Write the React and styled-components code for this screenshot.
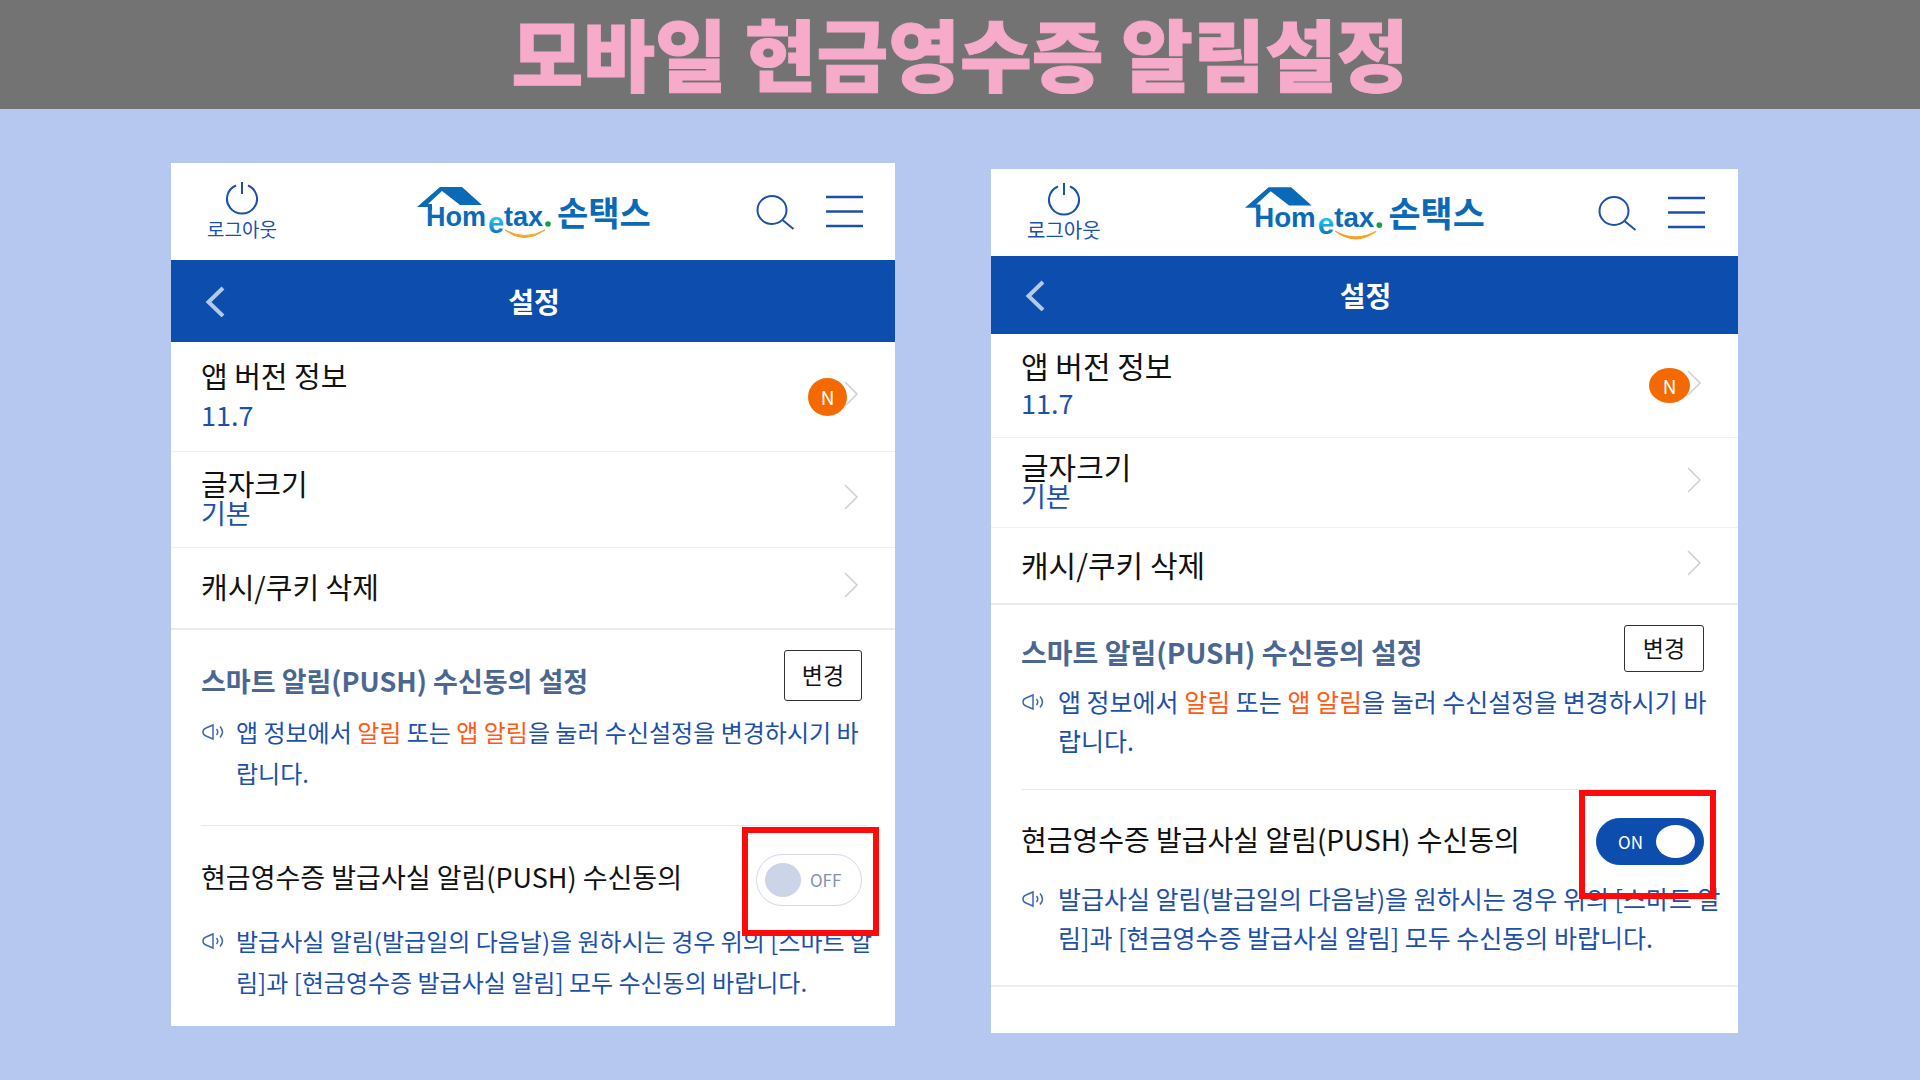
import React, { useId, useState } from 'react';
import styled, { createGlobalStyle, ThemeProvider } from 'styled-components';

const GlobalStyle = createGlobalStyle`
  * {
    box-sizing: border-box;
  }

  body {
    margin: 0;
    background-color: #b6c8f0;
    font-family: 'Noto Sans CJK KR', 'Noto Sans', sans-serif;
  }

  button {
    font-family: inherit;
    border: none;
    background: none;
    padding: 0;
    cursor: pointer;
  }
`;

const regular = {
  headerHeight: 97,
  headerEnd: 32,
  barHeight: 82,
  rows: [110, 96, 81],
  labelSize: 19,
  rowSize: 29,
  valueSize: 27,
  valueGap: 39,
  headSize: 27,
  noteSize: 24,
  noteLine: 41,
  noteIndent: 35,
  noteBleed: 8,
  sectionEnd: 5,
  button: [78, 51],
  toggle: [106, 52],
  knob: [36, 34],
  badge: [39, 38],
  markInset: '-27px -17px -30px -14px',
  logoWidth: 236,
  sectionBottom: 32,
  lastBottom: 24,
};

const wide = {
  headerHeight: 87,
  headerEnd: 33,
  barHeight: 78,
  rows: [104, 90, 76],
  labelSize: 20,
  rowSize: 30,
  valueSize: 27,
  valueGap: 37,
  headSize: 28,
  noteSize: 25,
  noteLine: 39,
  noteIndent: 37,
  noteBleed: 12,
  sectionEnd: 6,
  button: [80, 47],
  toggle: [108, 47],
  knob: [39, 33],
  badge: [41, 35],
  markInset: '-28px -12px -34px -17px',
  logoWidth: 242,
  sectionBottom: 29,
  lastBottom: 28,
};

const Banner = styled.header`
  display: flex;
  justify-content: center;
  height: 109px;
  background-color: #737373;
`;

const BannerTitle = styled.h1`
  margin: 0;
  color: #f6abcb;
  font-size: 78px;
  font-weight: 900;
  line-height: 105px;
  -webkit-text-stroke: 1px #f6abcb;
`;

const Screens = styled.main`
  display: grid;
  grid-template-columns: 724fr 747fr;
  align-items: start;
  gap: 96px;
  padding: 54px 182px 48px 171px;
`;

const Screen = styled.section`
  background-color: white;
  margin-top: ${props => (props.$lower ? '6px' : '0')};
  padding-bottom: ${props => (props.$lower ? '46px' : '0')};
`;

const AppHeader = styled.div`
  display: grid;
  grid-template-columns: 1fr auto 1fr;
  align-items: center;
  height: ${props => props.theme.headerHeight}px;
  padding: 0 ${props => props.theme.headerEnd}px 0 36px;
`;

const LogoutBtn = styled.button`
  display: flex;
  flex-direction: column;
  align-items: center;
  justify-self: start;
  color: #1c50ab;
  font-size: ${props => props.theme.labelSize}px;
  line-height: 28px;
`;

const HeaderIcons = styled.div`
  display: flex;
  align-items: center;
  justify-self: end;
  gap: 31px;
`;

const IconBtn = styled.button`
  display: flex;
`;

const TitleBar = styled.div`
  display: grid;
  grid-template-columns: 1fr auto 1fr;
  align-items: center;
  height: ${props => props.theme.barHeight}px;
  padding: 0 32px 0 34px;
  background-color: #0d4dae;
`;

const BarTitle = styled.h2`
  margin: 0;
  color: white;
  font-size: 28px;
  font-weight: 700;
  line-height: 40px;
`;

const List = styled.ul`
  list-style: none;
  margin: 0;
  padding: 0;
`;

const Row = styled.li`
  border-bottom: ${props => (props.$last ? '2px solid #ebebeb' : '1px solid #f0f0f0')};
`;

const RowBtn = styled.button`
  display: flex;
  align-items: center;
  justify-content: space-between;
  width: 100%;
  height: ${props => props.theme.rows[props.$index] - 1}px;
  padding: 0 36px 0 30px;
  text-align: left;
`;

const RowText = styled.span`
  display: flex;
  flex-direction: column;
  padding-bottom: 3px;
  color: #111;
  font-size: ${props => props.theme.rowSize}px;
  line-height: ${props => (props.$tight ? 30 : props.theme.valueGap)}px;
`;

const RowValue = styled.span`
  color: #1c50ab;
  font-size: ${props => props.theme.valueSize}px;
`;

const RowEnd = styled.span`
  display: flex;
  align-items: center;
`;

const Badge = styled.span`
  z-index: 1;
  display: flex;
  align-items: center;
  justify-content: center;
  width: ${props => props.theme.badge[0]}px;
  height: ${props => props.theme.badge[1]}px;
  margin-right: -3px;
  border-radius: 50%;
  background-color: #f56a00;
  color: white;
  font-size: 19px;
`;

const Section = styled.div`
  margin: 0 28px 0 30px;
  padding: 20px 0 ${props => props.theme.sectionBottom}px;
`;

const ToggleSection = styled(Section)`
  padding: 28px 0 ${props => props.theme.lastBottom}px;
  border-top: 1px solid #e8e8e8;
`;

const LastLine = styled.div`
  border-bottom: 2px solid #ededed;
`;

const SectionHead = styled.div`
  display: flex;
  align-items: flex-end;
  justify-content: space-between;
  padding-right: ${props => props.theme.sectionEnd}px;
`;

const SectionTitle = styled.h3`
  margin: 0;
  color: #4b6791;
  font-size: ${props => props.theme.headSize}px;
  font-weight: 700;
  line-height: 40px;
`;

const ToggleLabel = styled.label`
  align-self: center;
  padding-bottom: 6px;
  color: #111;
  font-size: ${props => props.theme.headSize}px;
  line-height: 40px;
`;

const ChangeBtn = styled.button`
  width: ${props => props.theme.button[0]}px;
  height: ${props => props.theme.button[1]}px;
  padding-bottom: 3px;
  border: 1px solid #333;
  border-radius: 3px;
  color: #111;
  font-size: 23px;
`;

const Note = styled.div`
  display: grid;
  grid-template-columns: ${props => props.theme.noteIndent}px 1fr;
  margin-top: ${props => (props.$far ? 14 : 10)}px;
  margin-right: -${props => props.theme.noteBleed}px;
  color: #1c50ab;
  font-size: ${props => props.theme.noteSize}px;
  line-height: ${props => props.theme.noteLine}px;

  p {
    margin: 0;
  }

  em {
    color: #ff5a14;
    font-style: normal;
  }
`;

const NoteIcon = styled.span`
  display: flex;
  align-items: center;
  height: ${props => props.theme.noteLine}px;
`;

const ToggleWrap = styled.span`
  position: relative;
  display: flex;
`;

const ToggleTrack = styled.span`
  display: flex;
  flex-direction: ${props => (props.$on ? 'row-reverse' : 'row')};
  align-items: center;
  gap: ${props => (props.$on ? '13px' : '9px')};
  width: ${props => props.theme.toggle[0]}px;
  height: ${props => props.theme.toggle[1]}px;
  padding: 0 8px;
  border: 1px solid ${props => (props.$on ? '#0d4dae' : '#d5d9e8')};
  border-radius: 26px;
  background-color: ${props => (props.$on ? '#0d4dae' : 'white')};
  color: ${props => (props.$on ? 'white' : '#8592b3')};
  font-size: 17px;
  line-height: 28px;
`;

const Knob = styled.span`
  width: ${props => props.theme.knob[0]}px;
  height: ${props => props.theme.knob[1]}px;
  border-radius: 50%;
  background-color: ${props => (props.$on ? 'white' : '#ccd4e7')};
`;

const ToggleInput = styled.input`
  position: absolute;
  inset: 0;
  width: 100%;
  height: 100%;
  margin: 0;
  opacity: 0;
  cursor: pointer;
`;

const RedMark = styled.span`
  position: absolute;
  inset: ${props => props.theme.markInset};
  border: 6px solid #ff0a0a;
  pointer-events: none;
`;

const PowerIcon = () => (
  <svg width="34" height="34" viewBox="0 0 34 34" fill="none" stroke="#1c50ab" strokeWidth="2">
    <path d="M11 4.5a15 14.6 0 1 0 12 0M17 1v12" />
  </svg>
);

const SearchIcon = () => (
  <svg width="39" height="36" viewBox="0 0 39 36" fill="none" stroke="#1c50ab" strokeWidth="2">
    <ellipse cx="16" cy="16" rx="14.5" ry="14" />
    <path d="M26.5 26l11 9" />
  </svg>
);

const MenuIcon = () => (
  <svg width="37" height="34" viewBox="0 0 37 34" stroke="#1c50ab" strokeWidth="2.5">
    <path d="M0 2h37M0 16.500h37M0 31h37" />
  </svg>
);

const BackIcon = () => (
  <svg width="20" height="32" viewBox="0 0 20 32" fill="none" stroke="#b4c8e8" strokeWidth="4">
    <path d="M18 3L3.500 17 18 31" />
  </svg>
);

const ArrowIcon = () => (
  <svg width="15" height="32" viewBox="0 0 15 32" fill="none" stroke="#cfcfcf" strokeWidth="1.5">
    <path d="M1 1l12 12L1 25" />
  </svg>
);

const SpeakerIcon = () => (
  <svg width="24" height="18" viewBox="0 0 24 18" fill="none" stroke="#3f68b4" strokeWidth="1.5">
    <path d="M5 5L12 2v14l-7-3q-3-1-3-4t3-4z" />
    <path d="M15.500 6q2.500 3 0 6M19 3.500q5 5.500 0 11" />
  </svg>
);

const Logo = ({ width, gradientId }) => (
  <svg width={width} viewBox="0 -4 236 60" role="img" aria-label="Hometax 손택스">
    <defs>
      <linearGradient id={gradientId} x1="0" y1="0" x2="0" y2="1">
        <stop offset="0.4" stopColor="#1cc0ee" />
        <stop offset="0.9" stopColor="#0a68b6" />
      </linearGradient>
    </defs>
    <path d="M0 21L23 1h22l20 18H43L25 5 11 18h4v6h-4v-3z" fill="#0a6ab8" />
    <g fontFamily="'Liberation Sans', sans-serif" fontWeight="700" fill="#0a6ab8">
      <text x="9" y="40" fontSize="27">Hom</text>
      <text x="71" y="47" fontSize="29" fill={`url(#${gradientId})`}>e</text>
      <text x="87" y="40" fontSize="27">tax</text>
    </g>
    <circle cx="131" cy="38" r="2.800" fill="#16a13a" />
    <path d="M88 44q19 15 40 0-20 11-40 0z" fill="#f7a22c" stroke="#f7a22c" />
    <text
      x="140"
      y="40"
      fontSize="34"
      fontWeight="700"
      fontFamily="'Noto Sans CJK KR', sans-serif"
      fill="#0a6ab8"
    >
      손택스
    </text>
  </svg>
);

const settings = [
  { title: '앱 버전 정보', value: '11.7', isNew: true },
  { title: '글자크기', value: '기본', tight: true },
  { title: '캐시/쿠키 삭제' },
];

const SettingScreen = ({ theme, defaultOn, lower }) => {
  const [isOn, setIsOn] = useState(defaultOn);
  const id = useId();
  const Wrap = lower ? LastLine : React.Fragment;

  return (
    <ThemeProvider theme={theme}>
      <Screen $lower={lower}>
        <AppHeader>
          <LogoutBtn type="button">
            <PowerIcon />
            로그아웃
          </LogoutBtn>
          <Logo width={theme.logoWidth} gradientId={`${id}-e`} />
          <HeaderIcons>
            <IconBtn type="button" aria-label="검색">
              <SearchIcon />
            </IconBtn>
            <IconBtn type="button" aria-label="메뉴">
              <MenuIcon />
            </IconBtn>
          </HeaderIcons>
        </AppHeader>
        <TitleBar>
          <IconBtn type="button" aria-label="뒤로">
            <BackIcon />
          </IconBtn>
          <BarTitle>설정</BarTitle>
        </TitleBar>
        <List>
          {settings.map((item, index) => (
            <Row key={item.title} $last={index === settings.length - 1}>
              <RowBtn type="button" $index={index}>
                <RowText $tight={item.tight}>
                  {item.title}
                  {item.value && <RowValue>{item.value}</RowValue>}
                </RowText>
                <RowEnd>
                  {item.isNew && <Badge>N</Badge>}
                  <ArrowIcon />
                </RowEnd>
              </RowBtn>
            </Row>
          ))}
        </List>
        <Section>
          <SectionHead>
            <SectionTitle>스마트 알림(PUSH) 수신동의 설정</SectionTitle>
            <ChangeBtn type="button">변경</ChangeBtn>
          </SectionHead>
          <Note>
            <NoteIcon>
              <SpeakerIcon />
            </NoteIcon>
            <p>
              앱 정보에서 <em>알림</em> 또는 <em>앱 알림</em>을 눌러 수신설정을 변경하시기 바
              <br />
              랍니다.
            </p>
          </Note>
        </Section>
        <Wrap>
          <ToggleSection>
            <SectionHead>
              <ToggleLabel htmlFor={id}>현금영수증 발급사실 알림(PUSH) 수신동의</ToggleLabel>
              <ToggleWrap>
                <ToggleTrack $on={isOn}>
                  <Knob $on={isOn} />
                  {isOn ? 'ON' : 'OFF'}
                </ToggleTrack>
                <ToggleInput
                  id={id}
                  type="checkbox"
                  role="switch"
                  checked={isOn}
                  onChange={e => setIsOn(e.target.checked)}
                />
                <RedMark />
              </ToggleWrap>
            </SectionHead>
            <Note $far>
              <NoteIcon>
                <SpeakerIcon />
              </NoteIcon>
              <p>
                발급사실 알림(발급일의 다음날)을 원하시는 경우 위의 [스마트 알
                <br />
                림]과 [현금영수증 발급사실 알림] 모두 수신동의 바랍니다.
              </p>
            </Note>
          </ToggleSection>
        </Wrap>
      </Screen>
    </ThemeProvider>
  );
};

const App = () => {
  return (
    <>
      <GlobalStyle />
      <Banner>
        <BannerTitle>모바일 현금영수증 알림설정</BannerTitle>
      </Banner>
      <Screens>
        <SettingScreen theme={regular} defaultOn={false} />
        <SettingScreen theme={wide} defaultOn lower />
      </Screens>
    </>
  );
};

export default App;
